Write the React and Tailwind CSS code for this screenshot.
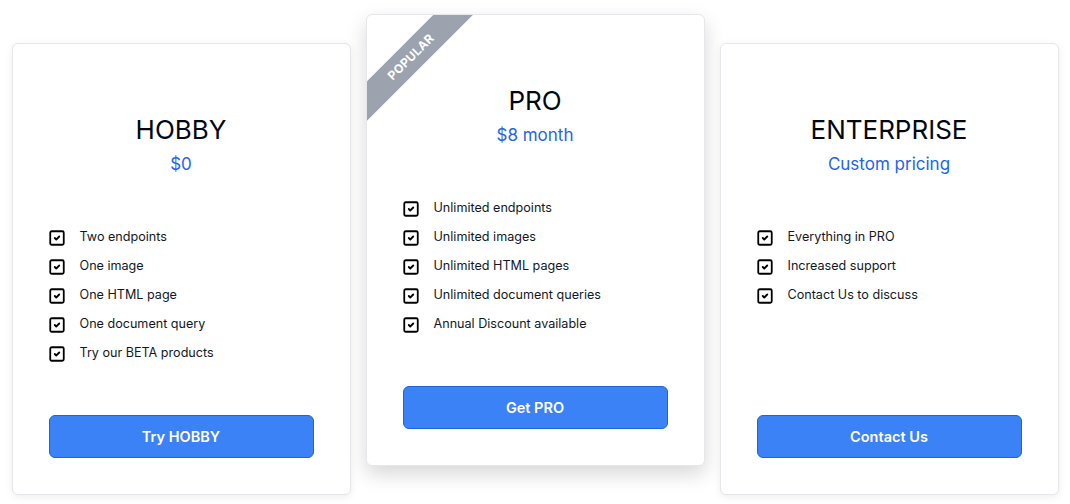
import React from 'react';
import { SquareCheck } from 'lucide-react';

const plans = [
  {
    name: 'HOBBY',
    price: '$0',
    features: ['Two endpoints', 'One image', 'One HTML page', 'One document query', 'Try our BETA products'],
    cta: 'Try HOBBY',
  },
  {
    name: 'PRO',
    price: '$8 month',
    features: [
      'Unlimited endpoints',
      'Unlimited images',
      'Unlimited HTML pages',
      'Unlimited document queries',
      'Annual Discount available',
    ],
    cta: 'Get PRO',
    popular: true,
  },
  {
    name: 'ENTERPRISE',
    price: 'Custom pricing',
    features: ['Everything in PRO', 'Increased support', 'Contact Us to discuss'],
    cta: 'Contact Us',
  },
];

const PlanCard = ({ plan }) => (
  <div
    className={`relative overflow-hidden w-[339px] h-[452px] flex flex-col bg-white border border-gray-200 rounded-md px-9 pt-[68px] pb-[36px] ${
      plan.popular ? 'shadow-[0_8px_20px_rgba(0,0,0,0.16)]' : 'mt-[29px] shadow-[0_2px_8px_rgba(0,0,0,0.07)]'
    }`}
  >
    {plan.popular && (
      <div className="absolute left-[-38px] top-[28px] w-[164px] h-[28px] -rotate-45 bg-[#9ca3af] flex items-center justify-center">
        <span className="text-white text-[12px] font-bold tracking-wide">POPULAR</span>
      </div>
    )}

    <h2 className="text-center text-[26px] leading-[36px] font-normal text-gray-950">{plan.name}</h2>
    <p className="text-center text-[17px] leading-6 text-[#2563eb] mt-1">{plan.price}</p>

    <ul className="mt-[47px]">
      {plan.features.map((f) => (
        <li key={f} className="flex items-center h-[29px] text-[12.6px] text-gray-900">
          <SquareCheck size={18} strokeWidth={2.4} className="text-black -ml-[1px] mr-[14px] shrink-0" />
          {f}
        </li>
      ))}
    </ul>

    <button className="mt-auto h-[43px] w-full bg-[#3b82f6] border border-[#1d64d8] rounded-md text-white text-[14.5px] font-semibold">
      {plan.cta}
    </button>
  </div>
);

const App = () => {
  return (
    <div className="min-h-screen bg-white font-['Inter',sans-serif] flex justify-center items-start gap-[15px] pt-[14px]">
      {plans.map((p) => (
        <PlanCard key={p.name} plan={p} />
      ))}
    </div>
  );
};

export default App;
